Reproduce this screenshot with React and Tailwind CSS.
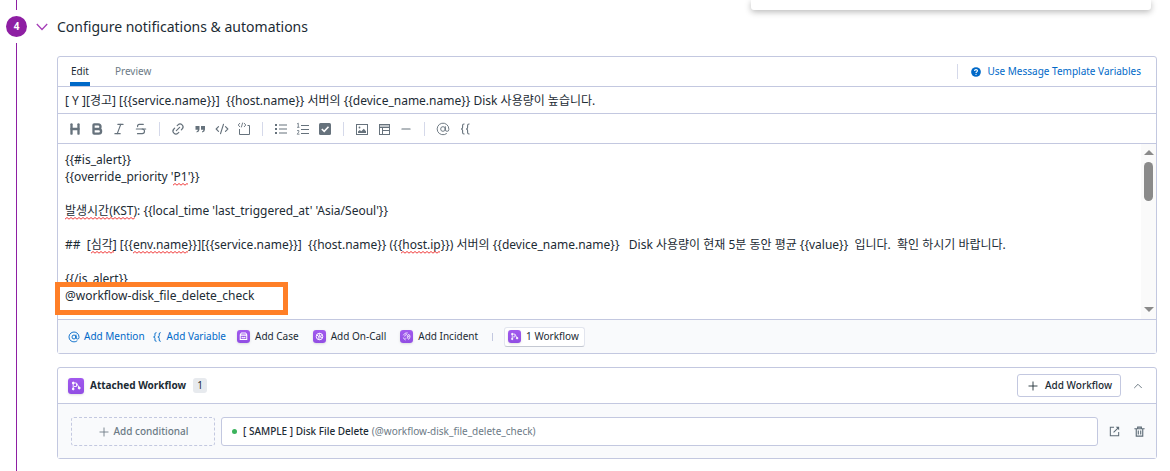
import React, { useState } from "react";
import {
  AtSign,
  Bold,
  ChevronUp,
  CodeXml,
  Heading,
  Italic,
  Link2,
  Minus,
  Plus,
  Strikethrough,
} from "lucide-react";

const TITLE =
  "[ Y ][경고] [{{service.name}}]  {{host.name}} 서버의 {{device_name.name}} Disk 사용량이 높습니다.";

const MESSAGE = [
  "{{#is_alert}}",
  "{{override_priority 'P1'}}",
  "",
  "발생시간(KST): {{local_time 'last_triggered_at' 'Asia/Seoul'}}",
  "",
  "##  [심각] [{{env.name}}][{{service.name}}]  {{host.name}} ({{host.ip}}) 서버의 {{device_name.name}}   Disk 사용량이 현재 5분 동안 평균 {{value}}  입니다.  확인 하시기 바랍니다.",
  "",
  "{{/is_alert}}",
  "@workflow-disk_file_delete_check",
].join("\n");

const LINE_HEIGHT = 17;

// spelling marks: line number, start and length on that line
const SPELLING = [
  { line: 1, left: 115, width: 15 },
  { line: 3, left: 7, width: 70 },
  { line: 5, left: 33, width: 23 },
  { line: 5, left: 75, width: 55 },
  { line: 5, left: 343, width: 39 },
];

const Chevron = ({ className }) => (
  <svg viewBox="0 0 12 8" className={className} fill="none" stroke="currentColor" strokeWidth="1.3">
    <path d="M.8 1L6 6.500L11.200 1" />
  </svg>
);

const Braces = ({ className }) => (
  <svg viewBox="0 0 14 14" className={className} fill="none" stroke="currentColor" strokeWidth="1.1">
    <path d="M6.500 2H6Q4.600 2 4.600 3.400V5.500Q4.600 7 3 7Q4.600 7 4.600 8.500V10.600Q4.600 12 6 12H6.500" />
    <path d="M11.500 2H11Q9.600 2 9.600 3.400V5.500Q9.600 7 8 7Q9.600 7 9.600 8.500V10.600Q9.600 12 11 12H11.500" />
  </svg>
);

const Quote = ({ className }) => (
  <svg viewBox="0 0 14 14" className={className} fill="currentColor">
    <path d="M2.500 4h4v3.500Q6.500 9.800 3.600 10.500V9.300Q4.900 8.800 4.900 7.700H2.500z" />
    <path d="M8 4h4v3.500Q12 9.800 9.100 10.500V9.300Q10.400 8.800 10.400 7.700H8z" />
  </svg>
);

const CodeBlock = ({ className }) => (
  <svg viewBox="0 0 14 14" className={className} fill="none" stroke="currentColor">
    <path d="M2.500 7V12.500H12.500V3.500H10.500" />
    <path d="M3 1L1.200 3L3 5M7 1L8.800 3L7 5M5.700 .6L4.300 5.400" strokeWidth=".9" />
  </svg>
);

const BulletList = ({ className }) => (
  <svg viewBox="0 0 14 14" className={className} fill="currentColor">
    <path d="M1 2h2v2H1zM1 6h2v2H1zM1 10h2v2H1zM5 2.500h8v1H5zM5 6.500h8v1H5zM5 10.500h8v1H5z" />
  </svg>
);

const NumberList = ({ className }) => (
  <svg viewBox="0 0 14 14" className={className} fill="none" stroke="currentColor">
    <path d="M5 3.500H13M5 7.500H13M5 11.500H13" />
    <path d="M1 2L2.300 1.200V5.300M1 5.300H3.500M1 8.800Q2.200 7.800 3 8.800Q3.300 9.700 1.200 12.200H3.500" strokeWidth=".8" />
  </svg>
);

const CheckBox = ({ className }) => (
  <svg viewBox="0 0 14 14" className={className}>
    <rect x="1" y="1" width="12" height="12" rx="1.500" fill="currentColor" />
    <path d="M3.800 7L6.200 9.300L10.500 4.800" fill="none" stroke="#fff" strokeWidth="1.600" />
  </svg>
);

const Picture = ({ className }) => (
  <svg viewBox="0 0 14 14" className={className}>
    <rect x="1.500" y="2.500" width="11" height="10" fill="none" stroke="currentColor" />
    <path d="M3 11V9.500L4.800 8L6.300 9.200L8.800 6.800L11 9.200V11z" fill="currentColor" />
    <circle cx="4.500" cy="5.500" r=".9" fill="currentColor" />
  </svg>
);

const TableIcon = ({ className }) => (
  <svg viewBox="0 0 14 14" className={className} fill="none" stroke="currentColor">
    <rect x="2.500" y="2.500" width="10" height="10" />
    <path d="M3 5.500H12M5.500 6V12M6 8.500H12" />
    <path d="M3 4H12" strokeOpacity=".4" strokeWidth="2" />
  </svg>
);

const External = ({ className }) => (
  <svg viewBox="0 0 14 14" className={className} fill="none" stroke="currentColor" strokeWidth="1.100">
    <path d="M6.500 2.500H2.500V11.500H11.500V7.500M6 8L11 3" />
    <path d="M8.300 2H12V5.700z" fill="currentColor" stroke="none" />
  </svg>
);

const Trash = ({ className }) => (
  <svg viewBox="0 0 14 14" className={className} fill="none" stroke="currentColor">
    <path d="M1.500 4H12.500M5 3.500V2.300H9V3.500M3.500 4V12H10.500V4M5.700 6V10.200M8.300 6V10.200" strokeWidth="1.200" />
  </svg>
);

const Question = ({ className }) => (
  <svg viewBox="0 0 14 14" className={className}>
    <circle cx="7" cy="7" r="6.800" fill="currentColor" />
    <path d="M4.900 5.600Q5 3.700 7 3.700Q9.100 3.700 9.100 5.400Q9.100 6.300 8 6.900Q7 7.400 7 8.300" fill="none" stroke="#fff" strokeWidth="1.500" />
    <circle cx="7" cy="10.300" r=".95" fill="#fff" />
  </svg>
);

const marks = {
  case: (
    <g fill="none" stroke="#fff" strokeWidth="1.300">
      <path d="M5 3.800H11M4 6.300H12V11.800H4zM4 6.300L5 3.800M12 6.300L11 3.800" />
      <path d="M6.300 8.300V9.500H9.700V8.300" />
    </g>
  ),
  call: (
    <g fill="none" stroke="#fff" strokeWidth="1.200">
      <circle cx="8" cy="8" r="4" />
      <path d="M4.500 6Q7 9 11.800 9.300M8 4Q6.800 6 9 8L11 5.500M7 8L7.500 12" />
    </g>
  ),
  incident: (
    <g fill="none" stroke="#fff" strokeWidth="1">
      <path d="M9.500 3.500Q5.500 3 4 6.500M8.500 5.500Q6 5.500 5.700 8M4.200 9.300Q4.700 11.500 7 12.300M7.200 9.500V10.800M10.200 5.500Q12.300 5.500 12.300 8Q12.300 10.700 10.500 11.500Q9 9.700 9 8Q9 6.200 10.200 5.500z" />
      <circle cx="10.700" cy="8" r=".5" />
    </g>
  ),
  workflow: (
    <g fill="#fff" stroke="#fff">
      <circle cx="5.200" cy="5" r=".9" />
      <circle cx="5.200" cy="11" r=".9" />
      <circle cx="11.200" cy="10" r="1" />
      <path d="M5.200 5V11M5.200 5H8.500L11 9.500M6 8.500H8.500V5.500" fill="none" strokeWidth=".9" />
    </g>
  ),
};

const ProductIcon = ({ name, className }) => (
  <svg
    viewBox="0 0 16 16"
    className={`shrink-0 rounded-[3px] bg-linear-to-b from-[#a259ee] to-[#914ee3] shadow-sm ${className}`}
  >
    {marks[name]}
  </svg>
);

const toolbar = [
  [
    ["Heading", <Heading className="size-[14px]" strokeWidth={4} />],
    ["Bold", <Bold className="size-[14px]" strokeWidth={4} />],
    ["Italic", <Italic className="size-[14px]" />],
    ["Strikethrough", <Strikethrough className="size-[14px]" />],
  ],
  [
    ["Link", <Link2 className="size-[14px] -rotate-45" />],
    ["Quote", <Quote className="size-[14px]" />],
    ["Code", <CodeXml className="size-[14px]" />],
    ["Code block", <CodeBlock className="size-[14px]" />],
  ],
  [
    ["Bulleted list", <BulletList className="size-[14px]" />],
    ["Numbered list", <NumberList className="size-[14px]" />],
    ["Task list", <CheckBox className="size-[14px]" />],
  ],
  [
    ["Image", <Picture className="size-[14px]" />],
    ["Table", <TableIcon className="size-[14px]" />],
    ["Divider", <Minus className="size-[14px]" />],
  ],
  [
    ["Mention", <AtSign className="size-[14px]" strokeWidth={1.6} />],
    ["Variable", <Braces className="size-[14px]" />],
  ],
];

const Toolbar = () => (
  <div className="flex h-[30px] items-center border-b border-[#c3c8e0] pl-[10px] text-[#66727c]">
    {toolbar.map((group, i) => (
      <div key={i} className="flex items-center">
        {i > 0 && <span className="mx-[11px] h-[14px] w-px bg-[#d5d9ea]" />}
        <div className="flex gap-2">
          {group.map(([label, icon]) => (
            <button key={label} type="button" aria-label={label}>
              {icon}
            </button>
          ))}
        </div>
      </div>
    ))}
  </div>
);

const MessageEditor = () => {
  const [message, setMessage] = useState(MESSAGE);

  return (
    <div className="flex h-[176px] border-b border-[#c3c8e0]">
      <div className="relative min-w-0 flex-1 text-[12px] leading-[17px]">
        <textarea
          aria-label="Message"
          spellCheck="false"
          className="block h-full w-full resize-none overflow-hidden px-[7px] py-[7px] whitespace-pre outline-none"
          value={message}
          onChange={(e) => setMessage(e.target.value)}
        />
        {message === MESSAGE &&
          SPELLING.map(({ line, left, width }) => (
            <svg
              key={`${line}-${left}`}
              className="pointer-events-none absolute h-[3px]"
              style={{ left, width, top: 5 + (line + 1) * LINE_HEIGHT }}
            >
              <defs>
                <pattern id="wave" width="4" height="3" patternUnits="userSpaceOnUse">
                  <path d="M-1 3L2 .5L5 3" fill="none" stroke="#f03c3c" strokeWidth="1" />
                </pattern>
              </defs>
              <rect width="100%" height="3" fill="url(#wave)" />
            </svg>
          ))}
        <div className="pointer-events-none absolute top-[138px] -left-[3px] h-[33px] w-[233px] border-5 border-[#ff7f27]" />
      </div>
      <div className="flex w-[15px] flex-col items-center bg-[#fafafa] pt-[6px] pb-[7px] text-[#8a8a8a]">
        <svg viewBox="0 0 10 5" className="h-[5px] w-[10px]" fill="currentColor">
          <path d="M5 0L10 5H0z" />
        </svg>
        <div className="mt-[7px] h-[39px] w-[9px] rounded-full bg-[#8a8a8a]" />
        <svg viewBox="0 0 10 5" className="mt-auto h-[5px] w-[10px]" fill="currentColor">
          <path d="M0 0H10L5 5z" />
        </svg>
      </div>
    </div>
  );
};

const EditorPanel = () => {
  const [title, setTitle] = useState(TITLE);

  return (
    <section className="rounded-[3px] border border-[#c3c8e0]">
      <div className="flex h-[30px] items-center justify-between border-b border-[#c3c8e0] pr-[15px] pl-3">
        <div role="tablist" className="flex h-full gap-6">
          <button type="button" role="tab" aria-selected="true" className="border-b-4 border-[#0069c8] px-px pt-1">
            Edit
          </button>
          <button
            type="button"
            role="tab"
            aria-selected="false"
            className="border-b-4 border-transparent px-px pt-1 text-[#6c7a86]"
          >
            Preview
          </button>
        </div>
        <a
          href="#variables"
          className="flex items-center gap-[6px] border-l border-[#d5d9ea] pl-[13px] text-[#0069c8]"
        >
          <Question className="size-[10px]" />
          Use Message Template Variables
        </a>
      </div>
      <input
        type="text"
        aria-label="Notification title"
        className="block h-[27px] w-full border-b border-[#c3c8e0] px-[7px] text-[12px] outline-none"
        value={title}
        onChange={(e) => setTitle(e.target.value)}
      />
      <Toolbar />
      <MessageEditor />
      <div className="flex h-[33px] items-center bg-[#f9fafc] pl-[10px]">
        <button type="button" className="flex items-center gap-1 text-[#0069c8]">
          <AtSign className="size-3" strokeWidth={1.8} />
          Add Mention
        </button>
        <button type="button" className="ml-[6px] flex items-center gap-1 text-[#0069c8]">
          <Braces className="size-3" />
          Add Variable
        </button>
        <button type="button" className="ml-[11px] flex items-center gap-[5px]">
          <ProductIcon name="case" className="size-[13px]" />
          Add Case
        </button>
        <button type="button" className="ml-[14px] flex items-center gap-[5px]">
          <ProductIcon name="call" className="size-[13px]" />
          Add On-Call
        </button>
        <button type="button" className="ml-[14px] flex items-center gap-[5px]">
          <ProductIcon name="incident" className="size-[13px]" />
          Add Incident
        </button>
        <span className="mr-[11px] ml-[14px] h-2 w-px bg-[#c3c8e0]" />
        <button
          type="button"
          className="flex h-5 items-center gap-[5px] rounded-[3px] border border-[#e2e5ee] border-b-[#c4c8d2] bg-white pr-[5px] pl-[3px]"
        >
          <ProductIcon name="workflow" className="size-[13px]" />
          1 Workflow
        </button>
      </div>
    </section>
  );
};

const WorkflowPanel = () => (
  <section className="mt-[13px] rounded-[3px] border border-[#c3c8e0]">
    <div className="flex h-9 items-center border-b border-[#c3c8e0] pr-[11px] pl-[10px]">
      <ProductIcon name="workflow" className="size-4" />
      <h3 className="ml-[6px] font-bold">Attached Workflow</h3>
      <span className="ml-[7px] flex h-[15px] w-[14px] items-center justify-center rounded-[3px] bg-[#e7eaee]">1</span>
      <button
        type="button"
        className="ml-auto flex h-[23px] items-center gap-[5px] rounded-[3px] border border-[#c3c8e0] px-2 font-medium"
      >
        <Plus className="size-[14px]" strokeWidth={1.5} />
        Add Workflow
      </button>
      <button type="button" aria-label="Collapse" className="ml-[10px] text-[#5d6b76]">
        <ChevronUp className="size-[14px]" strokeWidth={1.5} />
      </button>
    </div>
    <div className="flex items-center bg-[#f9fafc] pt-[13px] pr-[10px] pb-3 pl-[13px]">
      <button
        type="button"
        className="flex h-[29px] w-[144px] items-center justify-center gap-[2px] rounded-[3px] border border-dashed border-[#c3c8e0] font-medium text-[#6c7a86]"
      >
        <Plus className="size-[14px]" strokeWidth={1.5} />
        Add conditional
      </button>
      <div className="ml-[6px] flex h-[29px] flex-1 items-center rounded-[3px] border border-[#c3c8e0] bg-white px-[10px]">
        <span className="size-[5px] rounded-full bg-[#3bb35c]" />
        <span className="ml-[6px] font-medium">[ SAMPLE ] Disk File Delete</span>
        <span className="ml-[3px] text-[#6c7a86]">(@workflow-disk_file_delete_check)</span>
      </div>
      <div className="ml-[10px] flex gap-3 text-[#5d6b76]">
        <a href="#workflow" aria-label="Open workflow">
          <External className="size-[13px]" />
        </a>
        <button type="button" aria-label="Delete workflow">
          <Trash className="size-[13px]" />
        </button>
      </div>
    </div>
  </section>
);

const App = () => {
  return (
    <div className="relative flex min-h-screen bg-white font-['Noto_Sans','Noto_Sans_CJK_KR',sans-serif] text-[10px] text-[#1c2b34]">
      <div className="absolute top-0 right-[19px] h-[10px] w-[400px] rounded-b-[3px] bg-white shadow-[0_2px_6px_rgba(0,0,0,0.28)]" />
      <div className="flex w-[33px] shrink-0 flex-col items-center">
        <span className="h-[10px] w-px bg-[#8e1fa3]" />
        <span className="my-[6px] flex size-[21px] items-center justify-center rounded-full bg-[#8e1fa3] font-bold text-white">
          4
        </span>
        <span className="w-px flex-1 bg-[#8e1fa3]" />
      </div>
      <main className="min-w-0 flex-1 pr-[13px] pb-3">
        <h2 className="flex h-[53px] items-center pl-[3px]">
          <button type="button" className="flex items-center gap-[9px] text-[14px]">
            <Chevron className="h-2 w-3 text-[#a63fb8]" />
            Configure notifications &amp; automations
          </button>
        </h2>
        <div className="mt-[3px] ml-6">
          <EditorPanel />
          <WorkflowPanel />
        </div>
      </main>
    </div>
  );
};

export default App;
